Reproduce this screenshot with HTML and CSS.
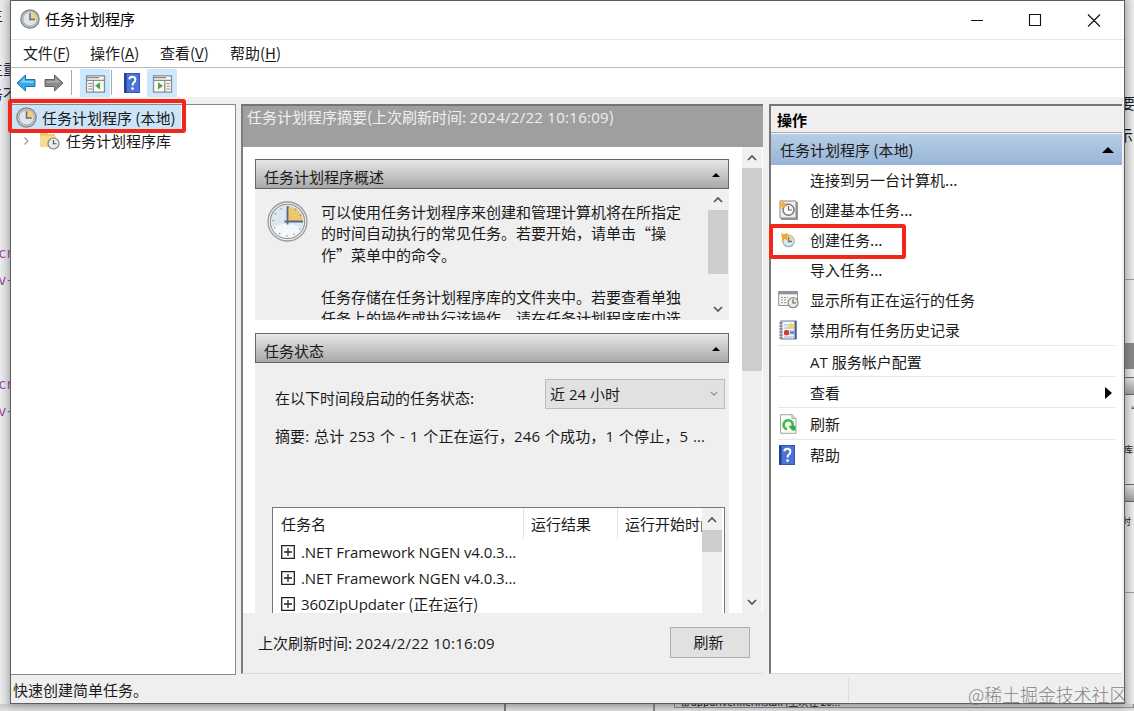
FILE: index.html
```html
<!DOCTYPE html>
<html lang="zh-CN">
<head>
    <meta charset="UTF-8">
    <meta name="viewport" content="width=device-width, initial-scale=1.0">
    <title>任务计划程序</title>
    <link rel="stylesheet" href="styles.css">
</head>
<body>
    <svg class="symbols" width="0" height="0">
        <symbol id="clock" viewBox="0 0 40 40">
            <circle cx="20" cy="20" r="19" fill="#f4f4f4" stroke="#9a9a9a" stroke-width="1.3"/>
            <circle cx="20" cy="20" r="16.8" fill="#dce7f1" stroke="#8f8f8f" stroke-width="1"/>
            <path d="M5 26A16 16 0 0 0 34 27Q20 18 5 26Z" fill="#f3f7fa"/>
            <path d="M20 20V5A15 15 0 0 1 35 20Z" fill="#edc66e"/>
            <circle cx="20" cy="20" r="14" fill="none" stroke="#7d8998" stroke-width="1.6" stroke-dasharray="1 6.33"/>
            <path d="M20 5V23M17 20H35" stroke="#5a6880" stroke-width="1.8"/>
        </symbol>
        <symbol id="clock-small" viewBox="0 0 20 20">
            <circle cx="10" cy="10" r="9.2" fill="#c4c4c4" stroke="#858585" stroke-width="1.2"/>
            <circle cx="10" cy="10" r="7.2" fill="#dde5ee" stroke="#9a9a9a" stroke-width=".8"/>
            <path d="M10 10V3A7 7 0 0 1 17 10Z" fill="#f0d184"/>
            <path d="M10 4V10.5H15" fill="none" stroke="#5d6878" stroke-width="1.4"/>
        </symbol>
        <symbol id="help" viewBox="0 0 18 20">
            <path d="M1 0H17V20H1Z" fill="#3155b5"/>
            <path d="M4 1H16V19H4Z" fill="#4a74d6"/>
            <path d="M1 0H3V20H1Z" fill="#24408f"/>
            <path d="M6.3 6.3Q6.5 3.8 9.3 3.8Q12.4 3.8 12.4 6.5Q12.4 8.3 10.8 9.5Q9.6 10.5 9.6 12.4" fill="none" stroke="#fff" stroke-width="2"/>
            <circle cx="9.6" cy="15.6" r="1.4" fill="#fff"/>
        </symbol>
        <symbol id="up" viewBox="0 0 10 6">
            <path d="M1 5L5 1L9 5" fill="none" stroke="#555" stroke-width="1.7"/>
        </symbol>
        <symbol id="down" viewBox="0 0 10 6">
            <path d="M1 1L5 5L9 1" fill="none" stroke="#555" stroke-width="1.7"/>
        </symbol>
        <symbol id="plus" viewBox="0 0 14 14">
            <path d="M.7 .7H13.3V13.3H.7ZM3 7H11M7 3V11" fill="none" stroke="#222" stroke-width="1.3"/>
        </symbol>
    </svg>

    <div class="behind">
        <div class="behind-left">
            <span class="frag f1">主</span>
            <span class="frag f2">主重</span>
            <span class="frag f3">务不</span>
            <span class="frag code f4">cr</span>
            <span class="frag code f5">v-</span>
            <span class="frag code f6">cr</span>
            <span class="frag code f7">v-</span>
        </div>
        <div class="behind-right">
            <span class="frag r1">要</span>
            <span class="frag r2">示</span>
            <div class="r-panel">
                <div class="r-band"></div>
                <div class="r-head"></div>
                <span class="frag r3">“操</span>
                <span class="frag r4">库中</span>
                <div class="r-head r-head2"></div>
                <span class="frag r5">时</span>
            </div>
        </div>
        <div class="behind-bottom">
            <div class="b-left"></div>
            <div class="b-mid"></div>
            <div class="b-list"><span>⊞ appuriverifierinstall (上次在 20...</span></div>
        </div>
    </div>

    <div class="window">
        <div class="titlebar">
            <svg class="title-icon" width="20" height="20"><use href="#clock-small"/></svg>
            <span class="title">任务计划程序</span>
            <svg class="win-btns" width="134" height="16" viewBox="0 0 134 16">
                <path d="M2 8.5H14M60.5 2.5H71.5V13.5H60.5ZM119 2.5L131 14.5M131 2.5L119 14.5" fill="none" stroke="#111" stroke-width="1.1"/>
            </svg>
        </div>

        <div class="menubar">
            <span>文件(<u>F</u>)</span>
            <span>操作(<u>A</u>)</span>
            <span>查看(<u>V</u>)</span>
            <span>帮助(<u>H</u>)</span>
        </div>

        <div class="toolbar">
            <svg class="back" width="20" height="18" viewBox="0 0 20 18">
                <path d="M1 9L9.5 1V5.5H19V12.5H9.5V17Z" fill="#35a8e8" stroke="#1b74b5"/>
                <path d="M4 8.6L8.5 4V7H17.5V9Z" fill="#7fd0f7"/>
            </svg>
            <svg class="forward" width="20" height="18" viewBox="0 0 20 18">
                <path d="M19 9L10.5 1V5.5H1V12.5H10.5V17Z" fill="#8b8b8b" stroke="#646464"/>
                <path d="M16 8.6L11.5 4V7H2.5V9Z" fill="#a9a9a9"/>
            </svg>
            <span class="sep"></span>
            <span class="tool-btn on">
                <svg width="21" height="18" viewBox="0 0 22 20">
                    <path d="M1 1H21V19H1Z" fill="#f7f7f7" stroke="#8b8b8b" stroke-width="1.4"/>
                    <path d="M1 3H15M1 6H21M8.5 7V19" stroke="#8b8b8b" stroke-width="1.4"/>
                    <path d="M3 9.5H7M3 12.5H7M3 15.5H7" stroke="#888" stroke-width="1.2"/>
                    <path d="M16 8V16L10.5 12Z" fill="#45ae32"/>
                </svg>
            </span>
            <span class="sep sep2"></span>
            <svg class="tool-help" width="18" height="20"><use href="#help"/></svg>
            <span class="tool-btn on">
                <svg width="21" height="18" viewBox="0 0 22 20">
                    <path d="M1 1H21V19H1Z" fill="#f7f7f7" stroke="#8b8b8b" stroke-width="1.4"/>
                    <path d="M1 3H15M1 6H21M13.5 7V19" stroke="#8b8b8b" stroke-width="1.4"/>
                    <path d="M15.5 9.5H19M15.5 12.5H19M15.5 15.5H19" stroke="#888" stroke-width="1.2"/>
                    <path d="M6 8V16L11.5 12Z" fill="#45ae32"/>
                </svg>
            </span>
        </div>

        <div class="panes">
            <div class="tree">
                <div class="tree-root">
                    <svg width="21" height="21"><use href="#clock-small"/></svg>
                    <span>任务计划程序 (本地)</span>
                </div>
                <div class="tree-child">
                    <svg class="chev" width="5" height="8" viewBox="0 0 5 8"><path d="M.5 .5L4 4L.5 7.5" fill="none" stroke="#999" stroke-width="1.1"/></svg>
                    <svg class="folder" width="21" height="19" viewBox="0 0 21 19">
                        <path d="M1 2Q1 1 2 1H7L9 3H16V16H1Z" fill="#edcb72"/>
                        <path d="M1 5H17V16H1Z" fill="#f8dd90"/>
                        <circle cx="14.5" cy="12.5" r="5.5" fill="#e7ecef" stroke="#808080" stroke-width="1.2"/>
                        <path d="M14.5 9V12.7H17.5" fill="none" stroke="#555" stroke-width="1.1"/>
                    </svg>
                    <span>任务计划程序库</span>
                </div>
            </div>

            <div class="summary">
                <div class="summary-title">任务计划程序摘要(上次刷新时间: <span class="date">2024/2/22 10:16:09</span>)</div>
                <div class="summary-main">
                    <div class="sections">
                        <div class="section-head">
                            <span>任务计划程序概述</span>
                            <i class="collapse"></i>
                        </div>
                        <div class="overview">
                            <svg class="big-clock" width="41" height="41"><use href="#clock"/></svg>
                            <div class="overview-text">
                                <p>可以使用任务计划程序来创建和管理计算机将在所指定<br>的时间自动执行的常见任务。若要开始，请单击“操<br>作”菜单中的命令。</p>
                                <p>任务存储在任务计划程序库的文件夹中。若要查看单独<br>任务上的操作或执行该操作，请在任务计划程序库中选</p>
                            </div>
                            <div class="scrollbar">
                                <svg width="10" height="6"><use href="#up"/></svg>
                                <div class="thumb"></div>
                                <svg width="10" height="6"><use href="#down"/></svg>
                            </div>
                        </div>
                        <div class="section-head">
                            <span>任务状态</span>
                            <i class="collapse"></i>
                        </div>
                        <div class="status">
                            <div class="period">
                                <span>在以下时间段启动的任务状态:</span>
                                <div class="select">
                                    <span>近 24 小时</span>
                                    <svg width="8" height="5" viewBox="0 0 10 6"><path d="M1 1L5 5L9 1" fill="none" stroke="#888" stroke-width="1.4"/></svg>
                                </div>
                            </div>
                            <div class="totals">摘要: 总计 253 个 - 1 个正在运行，246 个成功，1 个停止，5 ...</div>
                            <div class="tasks">
                                <div class="task-list">
                                    <div class="task-head">
                                        <span>任务名</span>
                                        <span>运行结果</span>
                                        <span>运行开始时间</span>
                                    </div>
                                    <div class="task-row"><svg width="14" height="14"><use href="#plus"/></svg><span class="net">.NET Framework NGEN v4.0.3...</span></div>
                                    <div class="task-row"><svg width="14" height="14"><use href="#plus"/></svg><span class="net">.NET Framework NGEN v4.0.3...</span></div>
                                    <div class="task-row"><svg width="14" height="14"><use href="#plus"/></svg><span><span class="net">360ZipUpdater</span> (正在运行)</span></div>
                                </div>
                                <div class="scrollbar">
                                    <svg width="10" height="6"><use href="#up"/></svg>
                                    <div class="thumb"></div>
                                </div>
                            </div>
                        </div>
                    </div>
                    <div class="scrollbar main-scroll">
                        <svg width="10" height="6"><use href="#up"/></svg>
                        <div class="thumb"></div>
                        <svg class="last" width="10" height="6"><use href="#down"/></svg>
                    </div>
                </div>
                <div class="summary-foot">
                    <span>上次刷新时间: <span class="date">2024/2/22 10:16:09</span></span>
                    <button class="btn">刷新</button>
                </div>
            </div>

            <div class="actions">
                <div class="actions-title">操作</div>
                <div class="actions-group">
                    <span>任务计划程序 (本地)</span>
                    <i class="triangle"></i>
                </div>
                <div class="action"><span class="icon"></span>连接到另一台计算机...</div>
                <div class="action">
                    <span class="icon">
                        <svg width="21" height="21" viewBox="0 0 21 21">
                            <path d="M3 2H20V20H3Z" fill="#999"/>
                            <path d="M2 1H18V18H2Z" fill="#eee" stroke="#888"/>
                            <circle cx="10.5" cy="9.8" r="5.5" fill="#f8fafb" stroke="#777" stroke-width="1.4"/>
                            <path d="M10.5 6V10H14" fill="none" stroke="#666" stroke-width="1.2"/>
                            <path d="M5 0L6.3 3L9 3.6L6.8 5.6L7 8.5L4.7 7L2 8L2.9 5.3L0 3.7L3.6 3Z" fill="#f6b23c"/>
                        </svg>
                    </span>创建基本任务...
                </div>
                <div class="action">
                    <span class="icon">
                        <svg width="21" height="21" viewBox="0 0 21 21">
                            <circle cx="10.5" cy="11" r="5.7" fill="#dce9f1" stroke="#9eaeb9" stroke-width="1.2"/>
                            <path d="M10.5 11V5.5A6 6 0 0 1 16 11Z" fill="#f5d88c"/>
                            <path d="M10.5 7V11.5H14" fill="none" stroke="#60758a" stroke-width="1.4"/>
                            <path d="M3 3L6 4.5L8 3L11 5L9 7L9 10L6.5 9L4 12L4 8Z" fill="#f5a623"/>
                        </svg>
                    </span>创建任务...
                </div>
                <div class="action"><span class="icon"></span>导入任务...</div>
                <div class="action">
                    <span class="icon">
                        <svg width="21" height="20" viewBox="0 0 21 20">
                            <path d="M.7 1.5H19.5V15.5H.7Z" fill="#f6f6f6" stroke="#8c9298"/>
                            <path d="M.7 3H19.5" stroke="#8c9298" stroke-width="2.6"/>
                            <path d="M3 7.5H10M3 10H9M3 12.7H8" stroke="#929292" stroke-dasharray="2 1"/>
                            <circle cx="15" cy="12.7" r="5" fill="#e9ecdf" stroke="#8d8d8d" stroke-width="1.3"/>
                            <path d="M15 9.3V13H18" fill="none" stroke="#53704a" stroke-width="1.2"/>
                        </svg>
                    </span>显示所有正在运行的任务
                </div>
                <div class="action">
                    <span class="icon">
                        <svg width="21" height="20" viewBox="0 0 21 20">
                            <path d="M3 1H18V19H3Z" fill="#f3f6fb" stroke="#6979a8" stroke-width="1.2"/>
                            <path d="M17.5 1V19" stroke="#455b9c" stroke-width="2"/>
                            <path d="M6 5H16M6 8H16M6 11H16M6 14H16M6 17H16" stroke="#a1b2ce"/>
                            <path d="M1 3H5M1 6H5M1 9H5M1 12H5M1 15H5M1 18H5" stroke="#777" stroke-width="1.1"/>
                            <path d="M13 2.5L16.5 8.5H9.5Z" fill="#f5d52d"/>
                            <circle cx="8.5" cy="12.7" r="2.6" fill="#d93a2b"/>
                            <path d="M12 12.5H16" stroke="#4c7ed4" stroke-width="2"/>
                        </svg>
                    </span>禁用所有任务历史记录
                </div>
                <div class="action ruled"><span class="icon"></span><span class="at">AT 服务帐户配置</span></div>
                <div class="action ruled"><span class="icon"></span>查看<i class="submenu"></i></div>
                <div class="action ruled">
                    <span class="icon">
                        <svg width="21" height="20" viewBox="0 0 21 20">
                            <path d="M2.5 .7H14L18 4.5V19.3H2.5Z" fill="#fafafa" stroke="#a5a5a5"/>
                            <path d="M14 .7V4.5H18" fill="#ddd" stroke="#a5a5a5"/>
                            <path d="M9 15.3A4.6 4.6 0 1 1 14.6 12.2" fill="none" stroke="#3dbd4b" stroke-width="2.7"/>
                            <path d="M10.5 11.8H17.5V16.5H14Z" fill="#2fad3e"/>
                        </svg>
                    </span>刷新
                </div>
                <div class="action ruled">
                    <span class="icon"><svg width="18" height="20"><use href="#help"/></svg></span>帮助
                </div>
            </div>
        </div>

        <div class="statusbar">
            <span>快速创建简单任务。</span>
            <i class="grip"></i>
        </div>
    </div>

    <div class="mark mark-root"></div>
    <div class="mark mark-create"></div>
    <div class="watermark">@稀土掘金技术社区</div>
</body>
</html>
```
FILE: styles.css
```css
* {
    margin: 0;
    padding: 0;
    box-sizing: border-box;
}

body {
    position: relative;
    width: 1134px;
    height: 711px;
    overflow: hidden;
    background: #e6e6e7;
    font-family: "Noto Sans CJK SC", sans-serif;
    font-size: 15px;
    line-height: 20px;
    color: #1a1a1a;
    white-space: nowrap;
}

svg {
    display: block;
    flex: none;
}

.symbols {
    position: absolute;
}

/* whatever is open behind the window */
.behind-left,
.behind-right,
.behind-bottom {
    position: absolute;
    overflow: hidden;
}

.behind-left {
    left: 0;
    top: 0;
    width: 10px;
    height: 711px;
    background: linear-gradient(90deg, #ececee, #d4d5d7);
}

.behind-right {
    left: 1125px;
    top: 0;
    width: 9px;
    height: 711px;
    background: linear-gradient(90deg, #d2d2d2, #eaeaea);
}

.behind-bottom {
    left: 0;
    top: 704px;
    width: 1134px;
    height: 7px;
    background: linear-gradient(#c5c7c8, #dfe1e2);
}

.frag {
    position: absolute;
}

.f1 { left: -12px; top: 5px; }
.f2 { left: -12px; top: 59px; color: #202050; }
.f3 { left: -12px; top: 84px; color: #202050; }

.code {
    left: -2px;
    font-family: "DejaVu Sans Mono", monospace;
    font-size: 14px;
    letter-spacing: -1px;
    color: #a0479f;
}

.f4 { top: 243px; }
.f5 { top: 270px; }
.f6 { top: 374px; }
.f7 { top: 401px; }

.r1 { left: -5px; top: 93px; }
.r2 { left: -7px; top: 125px; }
.r3, .r4, .r5 { font-size: 9px; }
.r3 { left: 1px; top: 121px; }
.r4 { left: -1px; top: 160px; }
.r5 { left: -3px; top: 232px; }

.r-panel {
    position: absolute;
    left: 0;
    top: 279px;
    width: 9px;
    height: 314px;
    border-top: 1px solid #999;
    border-bottom: 1px solid #999;
}

.r-band {
    margin-top: 63px;
    height: 26px;
    background: #848484;
}

.r-head {
    margin-top: 8px;
    height: 18px;
    border: 1px solid #666;
    border-width: 1px 0;
    background: linear-gradient(#ddd, #999);
}

.r-head2 {
    margin-top: 89px;
}

.behind-bottom {
    display: flex;
}

.b-left {
    width: 506px;
    border-right: 2px solid #777;
}

.b-mid {
    width: 149px;
    border-right: 2px solid #888;
}

.b-list {
    width: 460px;
    height: 4px;
    margin-left: 19px;
    border: 1px solid #888;
    border-top: 0;
    overflow: hidden;
}

.b-list span {
    display: block;
    margin-top: -9px;
    padding-left: 6px;
    font-size: 10px;
    line-height: 14px;
}

.window {
    position: absolute;
    left: 10px;
    top: 0;
    width: 1115px;
    height: 704px;
    display: flex;
    flex-direction: column;
    background: #efefef;
    border: 1px solid #5e5e5e;
    box-shadow: 0 2px 8px rgba(0, 0, 0, 0.25);
}

.titlebar {
    display: flex;
    align-items: center;
    height: 39px;
    padding: 0 21px 2px 9px;
    background: #fff;
    border-bottom: 1px solid #e5e5e5;
}

.title {
    margin-left: 5px;
    color: #000;
}

.win-btns {
    margin: 1px 0 0 auto;
}

.menubar {
    display: flex;
    gap: 20px;
    height: 28px;
    padding: 3px 0 0 12px;
    background: #fff;
    border-bottom: 1px solid #bbb;
}

.menubar span {
    width: 50px;
}

.menubar span:first-child {
    width: 47px;
    letter-spacing: -0.3px;
}

.menubar u {
    text-underline-offset: 2px;
}

.toolbar {
    display: flex;
    align-items: center;
    height: 29px;
    padding-left: 5px;
    background: #fff;
}

.forward {
    margin-left: 8px;
}

.sep {
    width: 1px;
    height: 25px;
    margin: 0 8px 0 7px;
    background: #aaa;
}

.sep2 {
    margin: 0 11px 0 1px;
}

.tool-btn {
    display: flex;
    align-items: center;
    justify-content: center;
    width: 30px;
    height: 28px;
    padding-top: 2px;
}

.on {
    background: #cce8ff;
}

.tool-help {
    margin-right: 6px;
}

.panes {
    display: flex;
    height: 571px;
    margin-top: 7px;
}

.tree {
    width: 225px;
    margin-right: 5px;
    background: #fff;
    border: 1px solid #8a8a8a;
    border-width: 1px 1px 1px 0;
}

.tree-root {
    display: flex;
    align-items: center;
    gap: 5px;
    width: 170px;
    height: 25px;
    padding-left: 5px;
    background: #cce4f7;
}

.tree-child {
    display: flex;
    align-items: center;
    height: 22px;
    padding: 0 0 1px 13px;
}

.folder {
    margin: 0 6px 0 10px;
}

.summary {
    width: 522px;
    height: 570px;
    border-top: 2px solid #757575;
    border-left: 2px solid #7d7d7d;
    border-bottom: 1px solid #dcdcdc;
    margin-right: 6px;
}

.summary-title {
    height: 41px;
    padding: 1px 0 0 4px;
    background: #9f9f9f;
    color: #efefef;
}

.date,
.net,
.at,
.totals,
.select {
    font-family: "Open Sans", "Noto Sans CJK SC", sans-serif;
}

.date {
    letter-spacing: 0.28px;
}

.net {
    font-size: 15px;
    letter-spacing: -0.08px;
}

.summary-main {
    display: flex;
    height: 466px;
    background: #fff;
}

.sections {
    width: 474px;
    height: 466px;
    margin: 0 13px 0 12px;
    padding-top: 12px;
    overflow: hidden;
}

.section-head {
    display: flex;
    justify-content: space-between;
    height: 30px;
    padding: 7px 8px 0;
    border: 1px solid #666;
    background: linear-gradient(#e8e8e8, #a8a8a8);
}

.collapse {
    width: 0;
    height: 0;
    margin-top: 6px;
    border: 4px solid transparent;
    border-top: 0;
    border-bottom: 4px solid #000;
}

.overview {
    display: flex;
    height: 131px;
    margin-bottom: 13px;
    padding-left: 12px;
    background: #efefef;
    overflow: hidden;
}

.big-clock {
    margin-top: 12px;
}

.overview-text {
    flex: 1;
    margin-left: 13px;
    padding-top: 12px;
    line-height: 21.3px;
}

.overview-text p {
    margin-bottom: 21.3px;
}

.scrollbar {
    display: flex;
    flex-direction: column;
    align-items: center;
    width: 20px;
    background: #f0f0f0;
}

.scrollbar svg {
    margin: 7px 0;
}

.thumb {
    width: 20px;
    height: 64px;
    background: #cdcdcd;
}

.overview .scrollbar {
    margin-right: 1px;
    padding-top: 1px;
}

.overview .thumb {
    margin-bottom: 25px;
}

.main-scroll {
    width: 20px;
    padding-top: 1px;
}

.main-scroll .thumb {
    height: 203px;
}

.main-scroll .last {
    margin-top: auto;
    margin-bottom: 8px;
}

.status {
    height: 250px;
    padding: 16px 4px 0 17px;
    background: #efefef;
}

.period {
    display: flex;
    justify-content: space-between;
    height: 47px;
    padding-left: 3px;
}

.period > span {
    padding-top: 9px;
}

.select {
    display: flex;
    align-items: center;
    justify-content: space-between;
    width: 180px;
    height: 30px;
    padding: 0 6px 1px 4px;
    background: #e1e1e1;
    border: 1px solid #bcbcbc;
}

.totals {
    height: 81px;
    padding-left: 3px;
    letter-spacing: 0.12px;
    word-spacing: 0.8px;
}

.tasks {
    display: flex;
    height: 120px;
    padding-right: 2px;
    background: #fff;
    border: 1px solid #777;
}

.task-list {
    width: 429px;
    overflow: hidden;
}

.task-head {
    display: flex;
    height: 31px;
    line-height: 32px;
}

.task-head span {
    flex: none;
    width: 94px;
    padding-left: 7px;
    border-left: 1px solid #e2e2e2;
}

.task-head span:first-child {
    width: 250px;
    padding-left: 8px;
    border: 0;
}

.task-row {
    display: flex;
    align-items: center;
    gap: 6px;
    height: 26.3px;
    padding: 0 0 1px 8px;
}

.tasks .scrollbar {
    padding-top: 2px;
}

.tasks .thumb {
    height: 22px;
}

.summary-foot {
    display: flex;
    justify-content: space-between;
    height: 60px;
    padding: 14px 13px 0 15px;
}

.summary-foot > span {
    padding-top: 6px;
}

.btn {
    width: 80px;
    height: 31px;
    padding: 0 3px 2px 0;
    background: #e1e1e1;
    border: 1px solid #adadad;
    font: inherit;
    line-height: 20px;
    color: #1a1a1a;
}

.actions {
    width: 353px;
    height: 570px;
    background: #fff;
    border-top: 2px solid #777;
    border-left: 2px solid #777;
    border-bottom: 1px solid #dcdcdc;
}

.actions-title {
    height: 27px;
    padding: 4px 0 0 6px;
    background: #efefef;
    border-bottom: 1px solid #aaa;
    font-weight: bold;
    color: #000;
}

.actions-group {
    display: flex;
    align-items: center;
    justify-content: space-between;
    height: 32px;
    padding: 0 8px 0 9px;
    border-top: 1px solid #f4f4f4;
    background: linear-gradient(#b7cee6, #98b4d7);
}

.triangle {
    border: 6px solid transparent;
    border-top: 0;
    border-bottom: 6px solid #000;
}

.action {
    display: flex;
    align-items: center;
    height: 30px;
    margin: 0 6px 0 7px;
}

.icon {
    width: 32px;
}

.ruled {
    height: 31.2px;
    padding-top: 1px;
    border-top: 1px solid #e8e8e8;
}

.submenu {
    margin: 0 4px 0 auto;
    border: 6px solid transparent;
    border-right: 0;
    border-left: 7px solid #000;
}

.statusbar {
    display: flex;
    align-items: center;
    justify-content: space-between;
    height: 27px;
    padding: 3px 275px 0 2px;
}

.grip {
    width: 1px;
    height: 24px;
    background: #ddd;
}

/* red call-out boxes */
.mark {
    position: absolute;
    border: 4px solid #f2261b;
    border-radius: 3px;
}

.mark-root {
    left: 8px;
    top: 99px;
    width: 178px;
    height: 34px;
}

.mark-create {
    left: 769px;
    top: 224px;
    width: 137px;
    height: 35px;
}

.watermark {
    position: absolute;
    left: 968px;
    top: 684px;
    font-size: 17.9px;
    font-weight: 300;
    color: #858585;
}
```
